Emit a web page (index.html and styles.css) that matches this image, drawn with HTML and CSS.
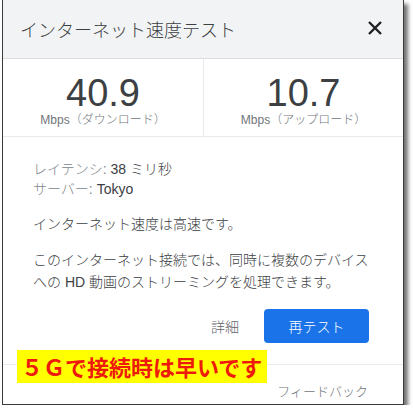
FILE: index.html
```html
<!DOCTYPE html>
<html lang="ja">
<head>
    <meta charset="UTF-8">
    <meta name="viewport" content="width=device-width, initial-scale=1.0">
    <title>インターネット速度テスト</title>
    <link rel="stylesheet" href="styles.css">
</head>
<body>
    <div class="card">
        <!-- Header -->
        <div class="header">
            <h2 class="title">インターネット速度テスト</h2>
            <svg class="close" width="14" height="14" viewBox="0 0 14 14">
                <path d="M1 1 L13 13 M13 1 L1 13" stroke="#202124" stroke-width="2.4" fill="none"/>
            </svg>
        </div>

        <!-- Results -->
        <div class="stats">
            <div class="stat">
                <div class="stat-num">40.9</div>
                <div class="stat-label">Mbps（ダウンロード）</div>
            </div>
            <div class="stat">
                <div class="stat-num">10.7</div>
                <div class="stat-label">Mbps（アップロード）</div>
            </div>
        </div>

        <div class="content">
            <div class="info"><span class="muted">レイテンシ:</span> 38 ミリ秒</div>
            <div class="info"><span class="muted">サーバー:</span> Tokyo</div>
            <p class="summary">インターネット速度は高速です。</p>
            <p class="desc">このインターネット接続では、同時に複数のデバイスへの HD 動画のストリーミングを処理できます。</p>
        </div>

        <div class="actions">
            <span class="link">詳細</span>
            <button type="button" class="retest">再テスト</button>
        </div>

        <div class="footer">フィードバック</div>

        <!-- note added on the screenshot -->
        <div class="note">５Ｇで接続時は早いです</div>
    </div>
</body>
</html>
```

FILE: styles.css
```css
body {
    margin: 0;
    background-color: white;
    font-family: "Liberation Sans", Arial, "Noto Sans CJK JP", sans-serif;
    font-weight: 300;
    color: #3c4043;
}
.card {
    position: relative;
    box-sizing: border-box;
    width: 402px;
    height: 405px;
    margin-left: 2px;
    background-color: white;
    border: 1px solid #3a3a3a;
    border-top: none;
    box-shadow: 4px 4px 4px rgba(0, 0, 0, 0.55);
}
.header {
    display: flex;
    align-items: center;
    justify-content: space-between;
    height: 58px;
    padding: 0 21px 0 17px;
    background-color: #f1f3f4;
    border-bottom: 1px solid #dadce0;
}
.title {
    margin: 0;
    font-size: 18px;
    font-weight: 300;
    color: #3c4043;
}
.close {
    margin-top: -3px;
}
.stats {
    display: grid;
    grid-template-columns: 1fr 1fr;
    height: 77px;
    border-bottom: 1px solid #e8eaed;
}
.stat {
    display: flex;
    flex-direction: column;
    align-items: center;
    padding-top: 15px;
}
.stat + .stat {
    border-left: 1px solid #e8eaed;
}
.stat-num {
    font-size: 38px;
    font-weight: 400;
    line-height: 38px;
    color: #3c4043;
}
.stat-label {
    font-size: 12px;
    line-height: 16px;
    color: #70757a;
}
.content {
    padding: 22px 30px 0;
    font-size: 14px;
}
.info {
    line-height: 20px;
    color: #3c4043;
}
.muted {
    color: #80868b;
}
.summary {
    margin: 14px 0 0;
    line-height: 22px;
}
.desc {
    margin: 14px 0 0;
    line-height: 22px;
}
.actions {
    display: flex;
    align-items: center;
    justify-content: flex-end;
    gap: 25px;
    margin-top: 16px;
    margin-bottom: 21px;
    padding-right: 34px;
}
.link {
    font-size: 14px;
    color: #5f6368;
}
.retest {
    width: 105px;
    height: 34px;
    border: none;
    border-radius: 4px;
    background-color: #1a73e8;
    color: white;
    font-family: inherit;
    font-weight: 300;
    font-size: 14px;
}
.footer {
    border-top: 1px solid #e8eaed;
    padding: 17px 35px 0 0;
    text-align: right;
    font-size: 13px;
    line-height: 20px;
    color: #70757a;
}
.note {
    position: absolute;
    left: 14px;
    top: 350px;
    height: 33px;
    padding: 0 5px 0 4px;
    background-color: #ffff00;
    color: #ee1a0c;
    font-family: "Noto Sans CJK JP", sans-serif;
    font-weight: bold;
    font-size: 22px;
    line-height: 33px;
}
```
